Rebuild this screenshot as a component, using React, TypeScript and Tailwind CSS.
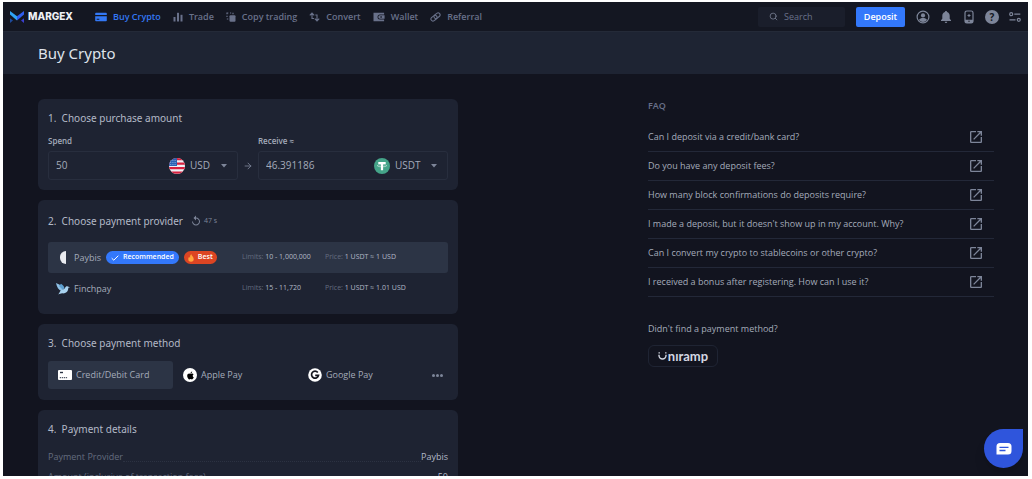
import type { ReactNode } from "react";
import { ArrowRight, Search } from "lucide-react";
import { FaApple } from "react-icons/fa";
import { MdOpenInNew, MdReplay } from "react-icons/md";

const NAV = [
  { label: "Buy Crypto", icon: <CardIcon />, active: true },
  { label: "Trade", icon: <TradeIcon /> },
  { label: "Copy trading", icon: <CopyIcon /> },
  { label: "Convert", icon: <ConvertIcon /> },
  { label: "Wallet", icon: <WalletIcon /> },
  { label: "Referral", icon: <LinkIcon /> },
];

const FAQ = [
  "Can I deposit via a credit/bank card?",
  "Do you have any deposit fees?",
  "How many block confirmations do deposits require?",
  "I made a deposit, but it doesn't show up in my account. Why?",
  "Can I convert my crypto to stablecoins or other crypto?",
  "I received a bonus after registering. How can I use it?",
];

const DETAILS = [
  ["Payment Provider", "Paybis"],
  ["Amount (inclusive of transaction fees)", "50"],
];

/* ---------- icons ---------- */

function Logo() {
  return (
    <svg viewBox="0 0 14 12" className="h-3 w-[14px]" aria-hidden="true">
      <path d="M0 0 L7 5.2 L7 9.4 L0 3.6z" fill="#2fa4f7" />
      <path d="M14 0 L7 5.2 L7 9.4 L14 3.6z" fill="#2f5df0" />
      <path d="M0 7.2 L3 9.6 L0 12z" fill="#1d4a9c" />
      <path d="M14 7.2 L11 9.6 L14 12z" fill="#3b3fd0" />
    </svg>
  );
}

function CardIcon() {
  return (
    <svg viewBox="0 0 12 10" className="h-[10px] w-3" fill="currentColor">
      <path d="M1 .8h10a.8.8 0 0 1 .8.8V3H.2V1.6A.8.8 0 0 1 1 .8z" />
      <path d="M.2 4.200h11.600v4.200a.8.8 0 0 1-.8.8H1a.8.8 0 0 1-.8-.8zM1.700 6.800v.9h2.600v-.9z" fillRule="evenodd" />
    </svg>
  );
}

function TradeIcon() {
  return (
    <svg viewBox="0 0 10 10" className="h-[10px] w-[10px]" fill="currentColor">
      <rect x=".5" y="5" width="2" height="4.500" />
      <rect x="4" y=".8" width="2" height="8.700" />
      <rect x="7.500" y="2.800" width="2" height="6.700" />
    </svg>
  );
}

function CopyIcon() {
  return (
    <svg viewBox="0 0 10 10" className="h-[10px] w-[10px]" fill="currentColor">
      <rect x="3.500" y="3.300" width="6" height="6.400" rx="1" />
      <path
        d="M1 2.300V1h1.300M4 1h1.200M7 .8v1.500M1 3.800v1.200M.8 7h1.500"
        fill="none"
        stroke="currentColor"
        strokeWidth="1.200"
      />
    </svg>
  );
}

function ConvertIcon() {
  return (
    <svg viewBox="0 0 11 10" className="h-[10px] w-[11px]" fill="none" stroke="currentColor" strokeWidth="1.100">
      <path d="M.8 3.300 3 1l2.200 2.300M3 1v5.500h2" />
      <path d="M5.800 6.700 8 9l2.200-2.300M8 9V3H6.300" />
    </svg>
  );
}

function WalletIcon() {
  return (
    <svg viewBox="0 0 12 10" className="h-[10px] w-3" fill="currentColor">
      <path d="M.5.8h10.600v1.700H7a2.500 2.500 0 0 0 0 5h4.100v1.700H.5z" />
      <path fillRule="evenodd" d="M7 3.300h4.600v3.400H7a1.700 1.700 0 0 1 0-3.400zm.4 1v1.400h1.400V4.300z" />
    </svg>
  );
}

function LinkIcon() {
  return (
    <svg viewBox="0 0 11 10" className="h-[10px] w-[11px]" fill="none" stroke="currentColor" strokeWidth="1.100">
      <rect x="3.700" y="1.700" width="6.600" height="4" rx="2" transform="rotate(-38 7 3.700)" />
      <rect x=".7" y="4.200" width="6.600" height="4" rx="2" transform="rotate(-38 4 6.200)" />
    </svg>
  );
}

function UserIcon() {
  return (
    <svg viewBox="0 0 14 14" className="size-[14px]">
      <circle cx="7" cy="7" r="5.900" fill="none" stroke="currentColor" strokeWidth="1.200" />
      <circle cx="7" cy="5.400" r="2.100" fill="currentColor" />
      <path d="M3 10c.8-1.500 2.200-2 4-2s3.200.5 4 2A5 5 0 0 1 7 12a5 5 0 0 1-4-2z" fill="currentColor" />
    </svg>
  );
}

function BellIcon() {
  return (
    <svg viewBox="0 0 14 14" className="size-[14px]" fill="currentColor">
      <path d="M7 1c.7 0 1 .4 1 1 1.800.5 2.700 2 2.700 3.800v3L12 10.300v.7H2v-.7l1.300-1.500v-3C3.300 4 4.200 2.500 6 2c0-.6.300-1 1-1zM5.700 11.700h2.600a1.300 1.300 0 0 1-2.600 0z" />
    </svg>
  );
}

function PhoneIcon() {
  return (
    <svg viewBox="0 0 14 14" className="size-[14px]">
      <rect x="3" y="1" width="8" height="12" rx="1.800" fill="none" stroke="currentColor" strokeWidth="1.200" />
      <path d="M3 9.700h8v2a1.300 1.300 0 0 1-1.300 1.300H4.300A1.300 1.300 0 0 1 3 11.700z" fill="currentColor" />
      <path d="M7 4v3M5.500 5.500h3" stroke="currentColor" />
      <circle cx="7" cy="11.300" r=".7" fill="#141722" />
    </svg>
  );
}

function HelpIcon() {
  return (
    <span className="flex size-[14px] items-center justify-center rounded-full bg-[#7d8599] text-[10px] leading-none font-bold text-[#141722]">
      ?
    </span>
  );
}

function SettingsIcon() {
  return (
    <svg viewBox="0 0 14 14" className="size-[14px]" fill="none" stroke="currentColor" strokeWidth="1.200">
      <circle cx="3.200" cy="4.200" r="1.500" />
      <path d="M6.300 4.200h6M1.500 9.800h6" />
      <circle cx="10.800" cy="9.800" r="1.500" />
    </svg>
  );
}

function UsFlag() {
  return (
    <svg viewBox="0 0 16 16" className="size-4" aria-hidden="true">
      <clipPath id="flag">
        <circle cx="8" cy="8" r="8" />
      </clipPath>
      <g clipPath="url(#flag)">
        <rect width="16" height="16" fill="#eef0f4" />
        <path d="M0 1.200h16M0 5.700h16M0 10.200h16M0 14.700h16" stroke="#d8203e" strokeWidth="2.300" />
        <rect width="8" height="8" fill="#2a63b5" />
        <path d="M1 2.500h6M1 4.500h6M1 6.500h6" stroke="#a9c4ea" strokeWidth=".7" strokeDasharray=".8 1" />
      </g>
    </svg>
  );
}

function TetherIcon() {
  return (
    <svg viewBox="0 0 16 16" className="size-4" aria-hidden="true">
      <circle cx="8" cy="8" r="8" fill="#45a489" />
      <path d="M4.300 4h7.400v2H9.100v6.300H6.900V6H4.300z" fill="#fff" />
      <ellipse cx="8" cy="7.700" rx="4.700" ry="1.100" fill="none" stroke="#fff" strokeWidth=".5" />
    </svg>
  );
}

function BirdIcon() {
  return (
    <svg viewBox="0 0 14 12" className="h-3 w-[14px]" aria-hidden="true">
      <path d="M0 0c2 1 4.500 1.400 6.300 4.300L7 6 5.800 8.200C2.500 7 .8 4 0 0z" fill="#8fc1e6" />
      <path d="M5 .8C7 2 8 3.200 8.400 5L7 7 3 3z" fill="#5d9fd0" />
      <path d="M2 11.500c1.200-1 1.600-2.300 2.500-3.800C6 6.500 8 6.700 9 5c.6-1.200 1.500-2 2.800-1.500L14 4.200l-1.700.6c0 3.600-2.300 5.700-5.300 5.700-1.600-.5-3 .6-5 1z" fill="#a8d2ef" />
    </svg>
  );
}

function GoogleIcon() {
  return (
    <svg viewBox="0 0 14 14" className="size-[14px]" aria-hidden="true">
      <circle cx="7" cy="7" r="6.800" fill="#fff" />
      <path d="M9.800 4.500A3.500 3.500 0 1 0 10.500 7.300H7.200" fill="none" stroke="#15171f" strokeWidth="1.700" />
    </svg>
  );
}

function Caret() {
  return (
    <svg viewBox="0 0 6 4" className="h-1 w-[6px]" fill="#7d8599" aria-hidden="true">
      <path d="M0 0h6L3 3.400z" />
    </svg>
  );
}

/* ---------- pieces ---------- */

function Card({ title, children }: { title: string; children: ReactNode }) {
  return (
    <section className="rounded-md bg-[#1e2332] px-[10px] pt-[11px] pb-[10px]">
      <CardTitle>{title}</CardTitle>
      {children}
    </section>
  );
}

function CardTitle({ children }: { children: ReactNode }) {
  return (
    <h2 className="font-['Noto_Sans','Open_Sans',sans-serif] text-[10px] leading-4 whitespace-pre text-[#b3b9c7]">
      {children}
    </h2>
  );
}

type AmountProps = { id: string; label: string; value: string; currency: string; icon: ReactNode };

function AmountField({ id, label, value, currency, icon }: AmountProps) {
  return (
    <div className="min-w-0 flex-1">
      <label htmlFor={id} className="block text-[8px] leading-3 font-semibold text-[#a4abba]">
        {label}
      </label>
      <div className="mt-1 flex h-[29px] items-center rounded-[3px] border border-[#282e3e] pr-[10px] pl-[7px] text-[10px] text-[#a4abba]">
        <input id={id} defaultValue={value} className="min-w-0 flex-1 bg-transparent outline-none" />
        {icon}
        <select aria-label={`${label} currency`} className="ml-[5px] appearance-none bg-transparent outline-none">
          <option>{currency}</option>
        </select>
        <span className="pl-[10px]">
          <Caret />
        </span>
      </div>
    </div>
  );
}

type ProviderProps = {
  name: string;
  icon: ReactNode;
  limits: string;
  price: string;
  selected?: boolean;
  children?: ReactNode;
};

function Provider({ name, icon, limits, price, selected, children }: ProviderProps) {
  return (
    <button
      type="button"
      aria-pressed={!!selected}
      className={`flex h-[31px] w-full items-center rounded-[3px] pl-2 text-left ${selected ? "bg-[#2c3445]" : ""}`}
    >
      <span className="flex w-[186px] shrink-0 items-center">
        <span className="mr-1 flex w-[14px] justify-center">{icon}</span>
        <span className="text-[9px] text-[#a4abba]">{name}</span>
        {children}
      </span>
      <span className="w-[83px] shrink-0 text-[7px] text-[#646c7f]">
        Limits: <span className="text-[#b3b9c7]">{limits}</span>
      </span>
      <span className="text-[7px] text-[#646c7f]">
        Price: <span className="text-[#b3b9c7]">{price}</span>
      </span>
    </button>
  );
}

function Method({ label, icon, selected }: { label: string; icon: ReactNode; selected?: boolean }) {
  return (
    <button
      type="button"
      aria-pressed={!!selected}
      className={`flex h-7 w-[125px] items-center gap-1 rounded-[3px] pl-[10px] text-[9px] text-[#a4abba] ${selected ? "bg-[#2c3445]" : ""}`}
    >
      {icon}
      {label}
    </button>
  );
}

function Header() {
  return (
    <header className="flex h-[30px] shrink-0 items-center border-b border-[#242a38] bg-[#141722] pr-[6px] pl-[7px] text-[#7d8599]">
      <a href="#home" className="flex items-center gap-1 font-['Inter',sans-serif] text-[10px] font-extrabold text-[#eef0f5]">
        <Logo />
        MARGEX
      </a>
      <nav className="ml-[22px] flex items-center gap-3">
        {NAV.map((item) => (
          <a
            key={item.label}
            href="#nav"
            className={`flex items-center gap-[6px] text-[9px] font-semibold whitespace-nowrap ${item.active ? "text-[#3378f5]" : "text-[#69718a]"}`}
          >
            {item.icon}
            {item.label}
          </a>
        ))}
      </nav>
      <label className="ml-auto flex h-5 w-[87px] items-center gap-[6px] rounded-[2px] bg-[#1a1e2b] px-[11px]">
        <Search size={9} className="shrink-0" />
        <input
          aria-label="Search"
          placeholder="Search"
          className="w-full min-w-0 bg-transparent text-[9px] outline-none placeholder:text-[#69718a]"
        />
      </label>
      <button type="button" className="mr-[11px] ml-[11px] h-5 w-[49px] rounded-[2px] bg-[#3378fb] text-[9px] font-semibold text-white">
        Deposit
      </button>
      <div className="flex items-center gap-[9px]">
        <button type="button" aria-label="Account"><UserIcon /></button>
        <button type="button" aria-label="Notifications"><BellIcon /></button>
        <button type="button" aria-label="Mobile app"><PhoneIcon /></button>
        <button type="button" aria-label="Help"><HelpIcon /></button>
        <button type="button" aria-label="Settings"><SettingsIcon /></button>
      </div>
    </header>
  );
}

export default function App() {
  return (
    <div className="h-screen bg-white pt-[2px] pr-1 pb-[3px] pl-[3px] font-['Open_Sans','Noto_Sans',sans-serif]">
      <div className="relative flex h-full flex-col overflow-hidden bg-[#12141f]">
        <Header />
        <div className="flex h-[42px] shrink-0 items-center bg-[#1e2433] px-[35px]">
          <h1 className="font-['Noto_Sans','Open_Sans',sans-serif] text-[15px] leading-6 text-[#dfe2ea]">Buy Crypto</h1>
        </div>

        <main className="grid min-h-0 flex-1 grid-cols-[420fr_346fr] gap-x-[190px] overflow-hidden pt-[25px] pr-[34px] pl-[35px]">
          <div className="flex min-w-0 flex-col gap-[10px]">
            <Card title="1.  Choose purchase amount">
              <div className="mt-[9px] flex">
                <AmountField id="spend" label="Spend" value="50" currency="USD" icon={<UsFlag />} />
                <span className="mt-4 flex w-5 items-center justify-center text-[#7d8599]">
                  <ArrowRight size={10} />
                </span>
                <AmountField id="receive" label="Receive ≈" value="46.391186" currency="USDT" icon={<TetherIcon />} />
              </div>
            </Card>

            <section className="rounded-md bg-[#1e2332] px-[10px] pt-[11px] pb-[10px]">
              <div className="flex h-5 items-center gap-[7px]">
                <CardTitle>{"2.  Choose payment provider"}</CardTitle>
                <span className="flex items-center gap-[2px] text-[7px] text-[#7d8599]">
                  <MdReplay size={12} />
                  47 s
                </span>
              </div>
              <div className="mt-[11px]">
                <Provider
                  name="Paybis"
                  selected
                  limits="10 - 1,000,000"
                  price="1 USDT ≈ 1 USD"
                  icon={<span className="h-[13px] w-[6px] rounded-l-full bg-[#e9ebf0]" />}
                >
                  <span className="ml-[5px] flex h-[13px] items-center gap-1 rounded-full bg-[#3378fb] px-[5px] text-[7px] font-semibold text-white">
                    <svg viewBox="0 0 8 6" className="h-[6px] w-2" fill="none" stroke="currentColor">
                      <path d="M.7 3.200 2.800 5.200 7.300.7" />
                    </svg>
                    Recommended
                  </span>
                  <span className="ml-[5px] flex h-[13px] items-center gap-1 rounded-full bg-[#dc4523] px-1 text-[7px] font-semibold text-white">
                    <svg viewBox="0 0 6 8" className="h-2 w-[6px]">
                      <path d="M3.200 0c.2 1.800 2.500 2.800 2.500 5A2.700 2.700 0 0 1 3 7.800 2.700 2.700 0 0 1 .3 5c0-1 .5-1.800 1-2.200.1.600.4 1 .8 1.100C2 2.500 2.200 1 3.200 0z" fill="#ffa63d" />
                    </svg>
                    Best
                  </span>
                </Provider>
                <Provider name="Finchpay" limits="15 - 11,720" price="1 USDT ≈ 1.01 USD" icon={<BirdIcon />} />
              </div>
            </section>

            <Card title="3.  Choose payment method">
              <div className="mt-[10px] flex items-center pb-px">
                <Method
                  selected
                  label="Credit/Debit Card"
                  icon={
                    <svg viewBox="0 0 14 10" className="h-[10px] w-[14px]">
                      <rect width="14" height="10" rx="1" fill="#fff" />
                      <path d="M2 2.500h3" stroke="#2c3445" strokeWidth="1.400" />
                      <path d="M1.800 7.700h7.500" stroke="#2c3445" strokeDasharray="1.300 .7" />
                    </svg>
                  }
                />
                <Method
                  label="Apple Pay"
                  icon={
                    <span className="flex size-[14px] items-center justify-center rounded-full bg-white text-black">
                      <FaApple size={9} />
                    </span>
                  }
                />
                <Method label="Google Pay" icon={<GoogleIcon />} />
                <button type="button" aria-label="More methods" className="mr-[5px] ml-auto flex gap-px">
                  <span className="size-[3px] rounded-full bg-[#7d8599]" />
                  <span className="size-[3px] rounded-full bg-[#7d8599]" />
                  <span className="size-[3px] rounded-full bg-[#7d8599]" />
                </button>
              </div>
            </Card>

            <Card title="4.  Payment details">
              <dl className="mt-[10px] text-[9px]">
                {DETAILS.map(([term, value]) => (
                  <div key={term} className="flex h-5 items-center">
                    <dt className="text-[#646c7f]">{term}</dt>
                    <dd className="flex flex-1 items-center text-[#b3b9c7]">
                      <span className="mt-2 flex-1 border-b border-dotted border-[#2c3242]" />
                      {value}
                    </dd>
                  </div>
                ))}
              </dl>
            </Card>
          </div>

          <aside className="min-w-0 text-[9px] text-[#a4abba]">
            <h2 className="leading-[14px] font-semibold text-[#69718a]">FAQ</h2>
            <ul className="mt-[10px]">
              {FAQ.map((question) => (
                <li key={question}>
                  <a href="#faq" className="flex h-[29px] items-center justify-between border-b border-[#232838] pr-[10px]">
                    {question}
                    <MdOpenInNew size={16} className="text-[#7d8599]" />
                  </a>
                </li>
              ))}
            </ul>
            <p className="mt-[25px] leading-[14px]">Didn't find a payment method?</p>
            <button
              type="button"
              aria-label="Uniramp"
              className="mt-[9px] flex h-[22px] w-[70px] items-center justify-center rounded-md border border-[#1f2433] font-['Lato',sans-serif] text-[13px] leading-none font-bold text-[#d3d7e2]"
            >
              <svg viewBox="0 0 9 8" className="mr-px h-2 w-[9px]" fill="none" stroke="currentColor" strokeWidth="1.400">
                <path d="M1 2.800v.7a3.500 3.500 0 0 0 7 0v-.7" />
                <path d="M1.200 .2v1.300M7.800 .2v1.300" />
              </svg>
              nıramp
            </button>
          </aside>
        </main>

        <button
          type="button"
          aria-label="Open chat"
          className="absolute right-[5px] bottom-2 flex size-[39px] items-center justify-center rounded-full rounded-tr-[5px] bg-[#2f55dc] shadow-lg"
        >
          <svg viewBox="0 0 16 12" className="h-3 w-4">
            <path d="M4 0h8a3.500 3.500 0 0 1 3.500 3.500V8A3.500 3.500 0 0 1 12 11.500H.5v-8A3.500 3.500 0 0 1 4 0z" fill="#fff" />
            <path d="M3.500 4.300h9M3.500 7.500h6" stroke="#2f55dc" strokeWidth="1.300" />
          </svg>
        </button>
      </div>
    </div>
  );
}
